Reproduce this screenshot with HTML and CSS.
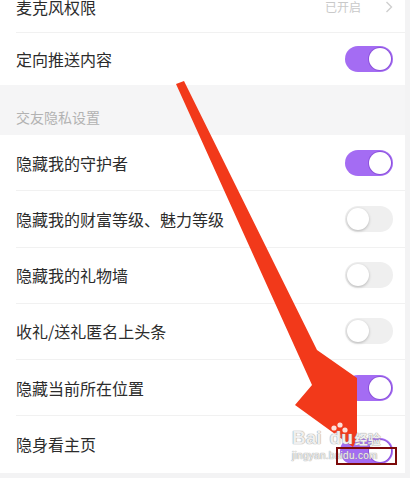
FILE: index.html
```html
<!DOCTYPE html><html><head><meta charset="utf-8"><meta name="viewport" content="width=device-width">
<title>隐私设置</title>
<link rel="stylesheet" href="styles.css">
</head>
<body>

<div class="page">
	<div class="group top">
		<div class="row">
			<span class="label">麦克风权限</span>
			<span class="value">已开启<svg class="chev" width="8" height="12" viewBox="0 0 8 12"><polyline points="1.5,1 6.5,6 1.5,11" fill="none" stroke="#cfcfcf" stroke-width="1.4"/></svg></span>
		</div>
		<div class="row last">
			<span class="label">定向推送内容</span>
			<span class="switch on"></span>
		</div>
	</div>

	<div class="section-title">交友隐私设置</div>

	<div class="group privacy">
		<div class="row"><span class="label">隐藏我的守护者</span><span class="switch on"></span></div>
		<div class="row"><span class="label">隐藏我的财富等级、魅力等级</span><span class="switch"></span></div>
		<div class="row"><span class="label">隐藏我的礼物墙</span><span class="switch"></span></div>
		<div class="row"><span class="label">收礼/送礼匿名上头条</span><span class="switch"></span></div>
		<div class="row"><span class="label">隐藏当前所在位置</span><span class="switch on"></span></div>
		<div class="row last"><span class="label">隐身看主页</span><span class="switch on shifted"></span></div>
	</div>
</div>

<!-- annotation on top of the screenshot -->
<svg class="arrow" width="410" height="478" viewBox="0 0 410 478">
	<polygon points="176,84 184,81 317,350 357,378 357,438 353,447 295,405 312,385" fill="#f2391a"/>
	<circle cx="334" cy="428" r="2.6" fill="#fff" opacity=".85"/>
	<circle cx="340" cy="425" r="2.6" fill="#fff" opacity=".85"/>
	<circle cx="345" cy="430" r="2.6" fill="#fff" opacity=".85"/>
	<circle cx="337" cy="436" r="3.4" fill="#fff" opacity=".85"/>
</svg>
<div class="watermark">
	<div class="wm-big">Bai<span class="wm-gap"></span>du<span class="wm-cn">经验</span></div>
	<div class="wm-url">jingyan.baidu.com</div>
</div>
<div class="mark"></div>

</body>
</html>
```

FILE: styles.css
```css
body {
	margin: 0;
	position: relative;
	width: 410px;
	height: 478px;
	overflow: hidden;
	background: #f3f3f4;
	font-family: "Noto Sans CJK SC", "Noto Sans", sans-serif;
	color: #2c2c2c;
}
.page {
	width: 405px;
	background: #fff;
}
.group.top {
	margin-top: -19px;
}
.row {
	display: flex;
	align-items: center;
	justify-content: space-between;
	box-sizing: border-box;
	height: 52px;
	margin-left: 16px;
	padding-right: 12px;
	border-bottom: 1px solid #f1f1f1;
}
.privacy .row {
	height: 56.25px;
}
.row.last {
	border-bottom: none;
}
.label {
	font-size: 16px;
	line-height: 22px;
}
.value {
	display: flex;
	align-items: center;
	font-size: 12px;
	color: #c9c9c9;
}
.chev {
	margin-left: 24px;
}
.section-title {
	box-sizing: border-box;
	height: 50px;
	padding: 22px 0 0 16px;
	font-size: 14px;
	line-height: 20px;
	color: #b2b2b2;
	background: #f5f5f6;
}
.switch {
	position: relative;
	width: 48px;
	height: 26px;
	border-radius: 13px;
	background: #efefef;
}
.switch::after {
	content: "";
	position: absolute;
	top: 2px;
	left: 2px;
	width: 22px;
	height: 22px;
	border-radius: 50%;
	background: #fff;
	box-shadow: 0 1px 3px rgba(0, 0, 0, .25);
}
.switch.on {
	background: #a46cf3;
}
.switch.on::after {
	left: auto;
	right: 2px;
	box-shadow: 0 0 0 1px #8c52dc;
}
/* the last toggle sits a bit lower and wider in the capture */
.switch.shifted {
	width: 53px;
	margin-top: 14px;
}
.arrow {
	position: absolute;
	top: 0;
	left: 0;
	pointer-events: none;
}
.watermark {
	position: absolute;
	left: 292px;
	top: 428px;
	color: rgba(255, 255, 255, .85);
	text-shadow: 0 0 1px #9a9a9a, 0 0 1px #9a9a9a;
	font-family: "Liberation Sans", sans-serif;
	pointer-events: none;
}
.wm-big {
	font-size: 19px;
	font-weight: bold;
	line-height: 20px;
}
.wm-gap {
	display: inline-block;
	width: 8px;
}
.wm-cn {
	font-family: "Noto Sans CJK SC", sans-serif;
	font-size: 13px;
	margin-left: 2px;
}
.wm-url {
	font-size: 10px;
	line-height: 13px;
	letter-spacing: .3px;
}
.mark {
	position: absolute;
	left: 336px;
	top: 447px;
	width: 61px;
	height: 18px;
	box-sizing: border-box;
	border: 2px solid #7c0a0a;
}
```
